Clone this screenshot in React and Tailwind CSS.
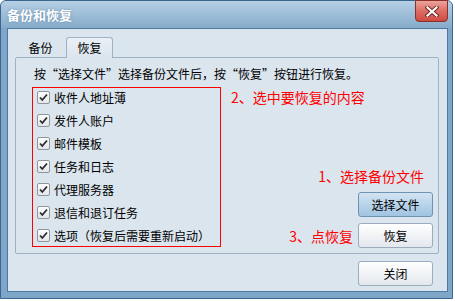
import React from "react";

const items = [
  "收件人地址薄",
  "发件人账户",
  "邮件模板",
  "任务和日志",
  "代理服务器",
  "退信和退订任务",
  "选项（恢复后需要重新启动）",
];

const CheckBox = () => (
  <span className="flex h-[13px] w-[13px] items-center justify-center rounded-[2px] border border-[#8f969c] bg-gradient-to-b from-[#fdfdfd] to-[#e2e6ea]">
    <svg width="11" height="11" viewBox="0 0 11 11">
      <path d="M2 5.5 L4.3 8 L9 2.5" fill="none" stroke="#2b2b2b" strokeWidth="1.8" />
    </svg>
  </span>
);

const Button = ({ children, active }) => (
  <button
    className={
      active
        ? "h-[25px] w-[75px] rounded-[3px] border border-[#6f93b3] bg-gradient-to-b from-[#d3e4f2] to-[#9fc3e1] text-[12px] text-black"
        : "h-[25px] w-[75px] rounded-[3px] border border-[#9aacbd] bg-gradient-to-b from-[#ffffff] to-[#e3e8ed] text-[12px] text-black"
    }
  >
    {children}
  </button>
);

export default function App() {
  return (
    <div className="h-[301px] w-[455px] bg-white font-['Noto_Sans_CJK_SC',sans-serif]">
      <div className="flex h-[299px] w-[453px] flex-col rounded-t-[6px] border border-[#3b6690] bg-[#7ea6c8]">
        {/* Title bar */}
        <div className="flex h-[27px] justify-between rounded-t-[5px] bg-gradient-to-b from-[#b6d0e5] to-[#85abca] pl-[6px]">
          <span className="pt-[5px] text-[13px] font-bold leading-[18px] text-white [text-shadow:0_0_2px_#5a7f9f]">
            备份和恢复
          </span>
          <div className="mr-[4px] -mt-[1px] flex h-[22px] w-[33px] items-center justify-center rounded-b-[4px] border border-[#8a2f29] bg-gradient-to-b from-[#eaa39c] via-[#dc6d65] to-[#cf4a41]">
            <svg width="14" height="11" viewBox="0 0 14 11">
              <path d="M2.5 1.5 L11.5 9.5 M11.5 1.5 L2.5 9.5" stroke="#6e2420" strokeWidth="4" strokeLinecap="square" />
              <path d="M2.5 1.5 L11.5 9.5 M11.5 1.5 L2.5 9.5" stroke="#ffffff" strokeWidth="2.2" strokeLinecap="square" />
            </svg>
          </div>
        </div>

        {/* Client area */}
        <div className="mb-[6px] ml-[6px] mr-[4px] flex flex-1 flex-col border border-[#4f79a0] bg-[#dbe5ee] text-[12px] text-black">
          {/* Tabs */}
          <div className="ml-[9px] mt-[8px] flex h-[20px] items-end">
            <div className="flex h-[19px] w-[47px] items-center justify-center leading-[16px]">备份</div>
            <div className="relative z-10 -mb-px ml-[2px] flex h-[21px] w-[47px] items-center justify-center rounded-t-[3px] border border-b-0 border-[#9db2c5] bg-gradient-to-b from-[#eaf0f5] to-[#dbe5ee] leading-[16px]">
              恢复
            </div>
          </div>

          {/* Panel */}
          <div className="ml-[7px] mr-[8px] flex h-[197px] flex-col rounded-[2px] border border-[#9db2c5]">
            <p className="pl-[18px] pt-[8px] leading-[16px]">
              按“选择文件”选择备份文件后，按“恢复”按钮进行恢复。
            </p>
            <div className="mt-[5px] flex">
              <div className="ml-[16px] h-[160px] w-[189px] border border-[#ff0000]">
                <div className="-mt-[2px] flex flex-col">
                  {items.map((t) => (
                    <div key={t} className="flex h-[23px] items-center gap-[4px] pl-[4px] leading-[16px]">
                      <CheckBox />
                      <span>{t}</span>
                    </div>
                  ))}
                </div>
              </div>
              <div className="flex flex-1 flex-col pr-[5px] text-[14px] leading-[18px] text-[#ff0000]">
                <span className="ml-[10px] mt-[1px]">2、选中要恢复的内容</span>
                <span className="mr-[9px] mt-[61px] self-end">1、选择备份文件</span>
                <div className="mt-[7px] self-end">
                  <Button active>选择文件</Button>
                </div>
                <div className="mt-[6px] flex items-center justify-end gap-[5px]">
                  <span>3、点恢复</span>
                  <Button>恢复</Button>
                </div>
              </div>
            </div>
          </div>

          {/* Bottom */}
          <div className="mr-[14px] mt-[7px] flex justify-end">
            <Button>关闭</Button>
          </div>
        </div>
      </div>
    </div>
  );
}
